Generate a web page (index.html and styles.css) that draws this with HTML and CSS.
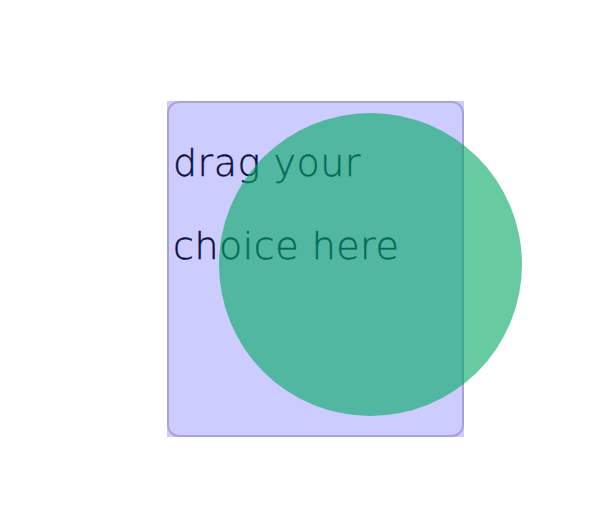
FILE: index.html
```html
<!DOCTYPE html>
<html>
<head>
<meta charset="utf-8">
<link rel="stylesheet" href="styles.css">
</head>
<body>
<div class="stage">
  <div class="dropzone">
    <div class="frame">
      <p class="label">drag your choice here</p>
    </div>
  </div>
  <div class="ball"></div>
</div>
</body>
</html>
```

FILE: styles.css
```css
html, body {
  margin: 0;
  padding: 0;
  background: #ffffff;
}
.stage {
  position: relative;
  width: 608px;
  height: 528px;
  padding: 101px 0 0 167px;
  box-sizing: border-box;
}
.dropzone {
  width: 297px;
  height: 336px;
  background: #ccccff;
}
.frame {
  box-sizing: border-box;
  width: 100%;
  height: 100%;
  border: 2px solid #a8a2d6;
  border-radius: 12px;
  padding: 0 4px;
}
.label {
  margin: 0;
  padding-top: 19px;
  width: 275px;
  font-family: "DejaVu Sans", "Lato", sans-serif;
  font-weight: 200;
  font-size: 38px;
  letter-spacing: 0.5px;
  -webkit-text-stroke: 0.4px #0d0d42;
  line-height: 83px;
  color: #0d0d42;
}
.ball {
  position: absolute;
  left: 219px;
  top: 113px;
  width: 303px;
  height: 303px;
  border-radius: 50%;
  background: rgba(0, 168, 97, 0.6);
}
```
